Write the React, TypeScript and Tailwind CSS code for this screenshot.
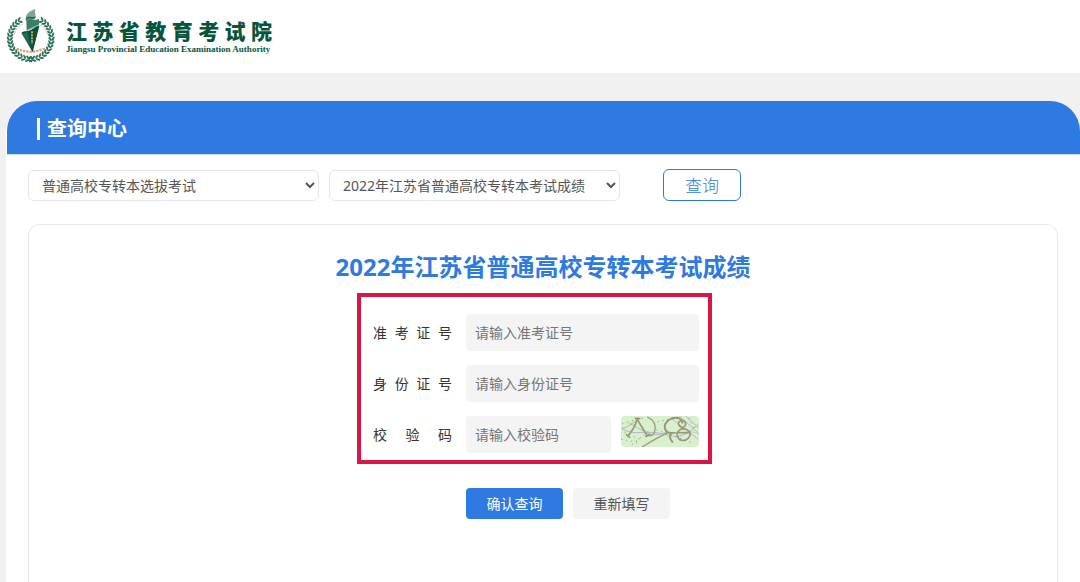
import React, { useState } from 'react';

const EXAM_TYPES = ['普通高校专转本选拔考试'];
const EXAM_NAMES = ['2022年江苏省普通高校专转本考试成绩'];

const LEAF_ANGLES = Array.from({ length: 16 }, (_, i) => -60 + i * 10);

function Emblem() {
  return (
    <svg viewBox="0 0 192 186" className="w-16 h-[62px] shrink-0" role="img" aria-label="江苏省教育考试院">
      {/* Laurel wreath, one half mirrored */}
      {[1, -1].map((side) => (
        <g key={side} transform={`translate(92 103) scale(${side} 1)`} fill="#2a6f5a">
          {LEAF_ANGLES.map((angle) => (
            <g key={angle} transform={`rotate(${angle}) translate(62 0)`}>
              <ellipse cx="5" cy="-2" rx="3" ry="7" transform="rotate(32)" />
              <ellipse cx="-4" cy="-1" rx="3" ry="7" transform="rotate(-42)" />
            </g>
          ))}
        </g>
      ))}
      {/* Inner ring */}
      <path d="M42 92A52 52 0 0 1 72 59M119 62A52 52 0 0 1 143 94" fill="none" stroke="#e3b08a" strokeWidth="2.5" strokeDasharray="4 1" />
      <path d="M50 134Q92 152 136 133" fill="none" stroke="#e4a06d" strokeWidth="7" strokeDasharray="7 3" />
      {/* Torch */}
      <path d="M77 43C78 28 91 20 106 15C103 25 108 31 106 41C98 47 86 38 77 51Z" fill="#7fa695" />
      <path d="M78 43C88 32 98 44 107 37L106 43C95 49 87 38 78 49Z" fill="#1f6650" />
      <path d="M79 48C91 40 103 53 117 44V65L80 80Z" fill="#397e67" />
      <path d="M80 78L117 61V64L82 81Z" fill="#a9c5b8" />
      <path d="M64 86C74 79 82 84 92 78C103 73 109 64 118 66L98 145Z" fill="#04533b" />
      <path d="M65 88L82 85L92 128Z" fill="#246b55" />
      <path d="M96 82V120" stroke="#d69a51" strokeWidth="6" strokeDasharray="6 3" />
    </svg>
  );
}

function Captcha() {
  return (
    <svg viewBox="0 0 234 93" className="w-full h-full" aria-hidden="true">
      <rect width="234" height="93" fill="#d9f0cc" />
      <g fill="none" stroke="#b5b5cf" strokeWidth="3">
        <path d="M2 38C42 62 76 40 126 54S190 62 232 25" />
        <path d="M25 22C66 41 94 72 139 46" />
        <path d="M155 10L232 70M175 0L232 51M193 0L233 35" />
        <path d="M173 62C198 43 215 46 234 54" strokeWidth="2" />
      </g>
      <g fill="none" stroke="#9b9a76" strokeLinecap="round">
        <path d="M65 92C91 76 108 65 137 52" strokeWidth="4" />
        <path d="M4 37C20 35 31 23 44 15" strokeWidth="2" />
        <path d="M43 7L56 8M49 8C43 31 33 46 20 60M16 56L26 64" strokeWidth="5" />
        <path d="M50 12C59 28 69 43 79 59M74 61L87 57" strokeWidth="5" />
        <path d="M80 4C101 11 108 34 98 53C94 60 86 61 83 56" strokeWidth="4" />
        <path d="M154 78C145 65 143 57 152 51C128 51 125 26 143 12C161 1 184 4 184 20" strokeWidth="6" />
        <path d="M173 18C183 9 198 16 193 28C188 38 170 35 173 18ZM176 42C189 34 211 42 207 58C201 76 178 78 171 65C167 57 167 48 176 42ZM152 51L207 49" strokeWidth="5" />
      </g>
      <g stroke="#5d6d72" strokeWidth="2" strokeLinecap="round" strokeDasharray="1 14">
        <path d="M5 22L68 5M2 70L55 80M12 49L62 73M34 85L86 42M111 17L176 4M108 42L208 78M204 7L223 44" />
      </g>
    </svg>
  );
}

interface FieldProps {
  id: string;
  label: string;
  value: string;
  onChange: (value: string) => void;
  children?: React.ReactNode;
}

function Field({ id, label, value, onChange, children }: FieldProps) {
  return (
    <div className="flex items-center">
      <label htmlFor={id} className="w-[79px] mr-[14px] shrink-0 text-sm text-[#333] [text-align-last:justify]">
        {label}
      </label>
      <input
        id={id}
        type="text"
        value={value}
        placeholder={`请输入${label}`}
        onChange={(e) => onChange(e.target.value)}
        className="flex-1 min-w-0 h-[37px] px-[9px] rounded bg-[#f4f4f4] text-sm placeholder:text-[#757575] outline-none"
      />
      {children}
    </div>
  );
}

const selectClass =
  'w-[291px] h-[31px] pl-[9px] rounded-md border border-[#e6e6e6] bg-white text-sm text-[#555] outline-none';

export default function App() {
  const [ticket, setTicket] = useState('');
  const [idCard, setIdCard] = useState('');
  const [code, setCode] = useState('');

  const reset = () => {
    setTicket('');
    setIdCard('');
    setCode('');
  };

  return (
    <div className="min-h-screen flex flex-col bg-[#f1f1f1] font-['Noto_Sans','Noto_Sans_CJK_SC',sans-serif]">
      <header className="h-[73px] flex items-start bg-white pt-1">
        <Emblem />
        <div className="w-[206px] ml-[2px] pt-[14px] text-[#07543c]">
          <p className="text-[21px] leading-6 font-black font-['Noto_Sans_CJK_SC',sans-serif] [text-align-last:justify]">
            江苏省教育考试院
          </p>
          <p className="mt-px text-[9px] leading-3 font-bold whitespace-nowrap font-['Liberation_Serif',serif]">
            Jiangsu Provincial Education Examination Authority
          </p>
        </div>
      </header>

      <main className="flex-1 flex flex-col mt-7 ml-[6px] rounded-t-[30px] bg-white">
        <div className="h-[54px] ml-px pl-[30px] pt-[3px] flex items-center gap-[7px] rounded-t-[30px] bg-[#2f7ae0] border-b border-[#c9def8]">
          <span className="w-[3px] h-[22px] bg-white" />
          <h1 className="text-xl font-bold text-white">查询中心</h1>
        </div>

        <div className="flex items-center gap-[10px] px-[22px] pt-[14px]">
          <select aria-label="考试类型" className={selectClass}>
            {EXAM_TYPES.map((name) => (
              <option key={name}>{name}</option>
            ))}
          </select>
          <select aria-label="考试名称" className={selectClass}>
            {EXAM_NAMES.map((name) => (
              <option key={name}>{name}</option>
            ))}
          </select>
          <button
            type="button"
            className="w-[78px] h-8 ml-[33px] rounded-md border border-[#2f7ae0] bg-white text-[17px] font-light leading-none text-[#2f7ae0]"
          >
            查询
          </button>
        </div>

        <section className="flex-1 flex flex-col items-center mt-[23px] mx-[22px] pt-[24px] rounded-t-xl border border-b-0 border-[#e8e8e8]">
          <h2 className="text-2xl leading-9 font-bold text-[#2f7ae0]">{EXAM_NAMES[0]}</h2>

          <form className="w-[372px] mt-2" onSubmit={(e) => e.preventDefault()}>
            <div className="w-[355px] flex flex-col gap-[14px] border-4 border-[#dc1446] pt-[17px] pb-[7px] pl-3 pr-[9px]">
              <Field id="ticket" label="准考证号" value={ticket} onChange={setTicket} />
              <Field id="id-card" label="身份证号" value={idCard} onChange={setIdCard} />
              <Field id="code" label="校验码" value={code} onChange={setCode}>
                <button
                  type="button"
                  aria-label="刷新校验码"
                  className="w-[78px] h-[31px] ml-[10px] shrink-0 self-start rounded-sm overflow-hidden"
                >
                  <Captcha />
                </button>
              </Field>
            </div>

            <div className="flex gap-[10px] mt-6 pl-[109px]">
              <button type="submit" className="w-[97px] h-[31px] rounded bg-[#2f7ae0] text-sm text-white">
                确认查询
              </button>
              <button
                type="button"
                onClick={reset}
                className="w-[97px] h-[31px] rounded bg-[#f4f4f4] text-sm text-[#555]"
              >
                重新填写
              </button>
            </div>
          </form>
        </section>
      </main>
    </div>
  );
}
